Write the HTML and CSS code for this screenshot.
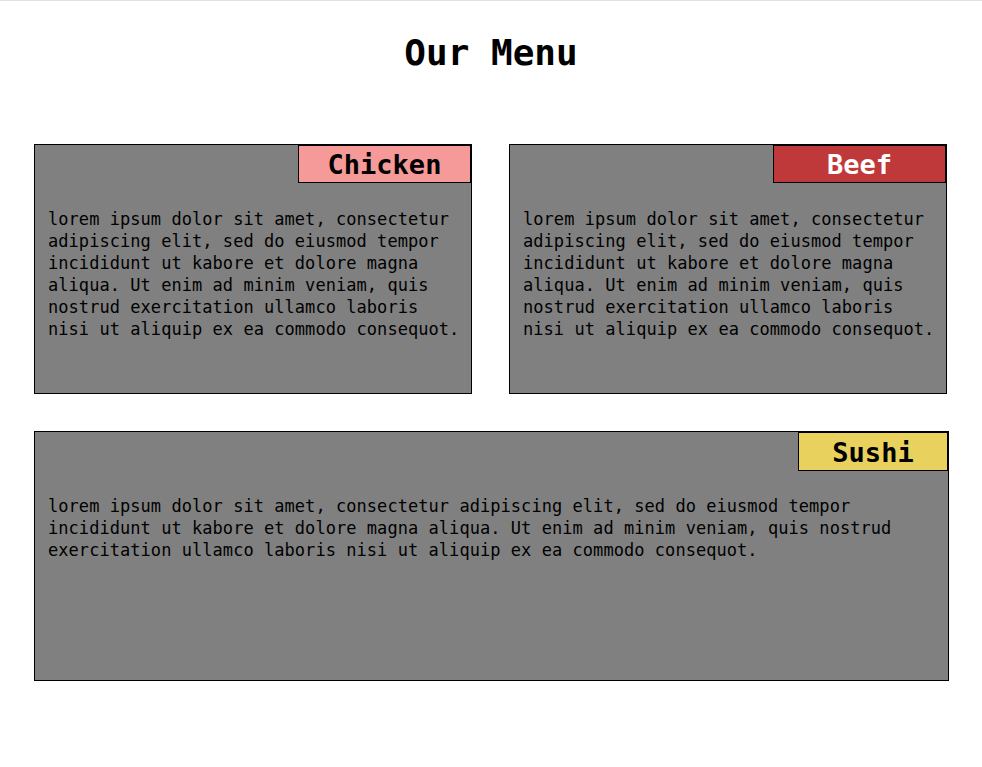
FILE: index.html
```html
<!DOCTYPE html>
<html>
<head>
<meta charset="utf-8">
<link rel="stylesheet" href="styles.css">
</head>
<body>
<div class="topline"></div>
<h1 class="title">Our Menu</h1>
<main class="menu">
  <section class="card">
    <h2 class="badge badge-chicken">Chicken</h2>
    <p class="desc">lorem ipsum dolor sit amet, consectetur adipiscing elit, sed do eiusmod tempor incididunt ut kabore et dolore magna aliqua. Ut enim ad minim veniam, quis nostrud exercitation ullamco laboris nisi ut aliquip ex ea commodo consequot.</p>
  </section>
  <section class="card">
    <h2 class="badge badge-beef">Beef</h2>
    <p class="desc">lorem ipsum dolor sit amet, consectetur adipiscing elit, sed do eiusmod tempor incididunt ut kabore et dolore magna aliqua. Ut enim ad minim veniam, quis nostrud exercitation ullamco laboris nisi ut aliquip ex ea commodo consequot.</p>
  </section>
  <section class="card card-wide">
    <h2 class="badge badge-sushi">Sushi</h2>
    <p class="desc">lorem ipsum dolor sit amet, consectetur adipiscing elit, sed do eiusmod tempor incididunt ut kabore et dolore magna aliqua. Ut enim ad minim veniam, quis nostrud exercitation ullamco laboris nisi ut aliquip ex ea commodo consequot.</p>
  </section>
</main>
</body>
</html>
```
FILE: styles.css
```css
html, body {
  margin: 0;
  padding: 0;
  background: #ffffff;
}
body {
  font-family: "DejaVu Sans Mono", "Liberation Mono", monospace;
  color: #000;
}
.topline {
  height: 1px;
  background: #e2e2e2;
}
.title {
  margin: 28px 0 0 0;
  font-size: 36px;
  line-height: 48px;
  font-weight: bold;
  text-align: center;
}
.menu {
  display: grid;
  grid-template-columns: 438px 438px;
  column-gap: 37px;
  row-gap: 37px;
  padding: 67px 0 0 34px;
}
.card {
  position: relative;
  box-sizing: border-box;
  height: 250px;
  background: #808080;
  border: 1px solid #000;
  padding: 0 6px 0 13px;
}
.card-wide {
  grid-column: 1 / -1;
  width: 915px;
}
.badge {
  position: absolute;
  top: 0;
  right: 0;
  margin: 0;
  box-sizing: border-box;
  height: 38px;
  width: 173px;
  border: 1px solid #000;
  padding-top: 1px;
  font-size: 27px;
  line-height: 35px;
  font-weight: bold;
  text-align: center;
}
.badge-chicken {
  background: #f59a98;
  color: #000;
}
.badge-beef {
  background: #c0393a;
  color: #fff;
}
.badge-sushi {
  background: #e8d25d;
  color: #000;
  width: 150px;
  height: 39px;
  padding-top: 2px;
}
.desc {
  margin: 63px 0 0 0;
  font-size: 17px;
  line-height: 22px;
  letter-spacing: 0.05px;
}
```
